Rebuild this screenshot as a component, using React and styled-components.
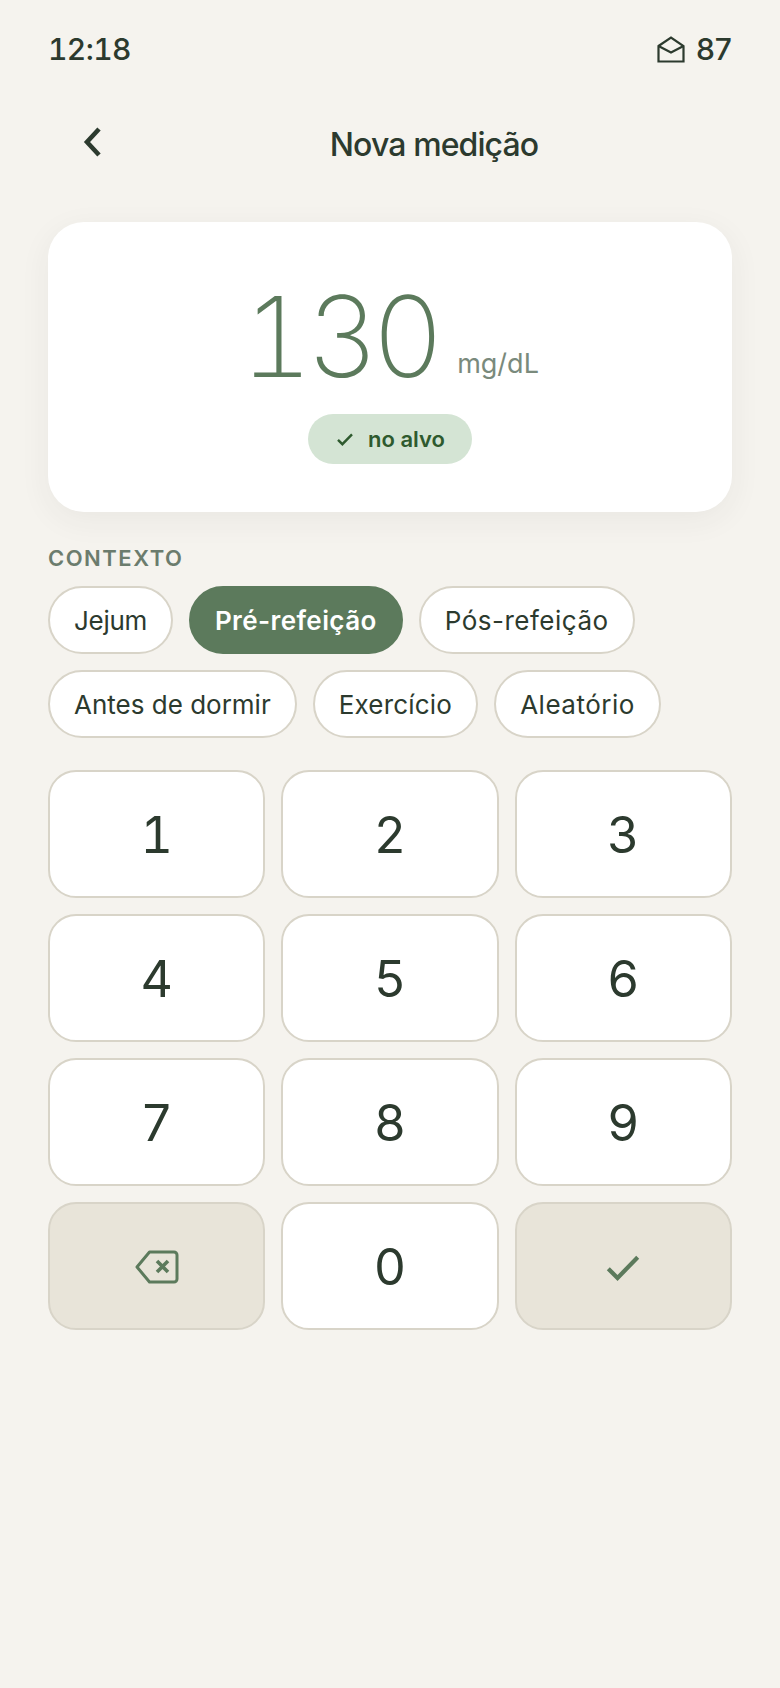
import React from "react";
import styled, { createGlobalStyle } from "styled-components";

const Global = createGlobalStyle`
  html, body { margin: 0; padding: 0; background: #f5f3ee; }
  body { font-family: "Inter", "Noto Sans", sans-serif; color: #2c3a2e; }
  * { box-sizing: border-box; }
`;
const Page = styled.div`
  width: 780px; height: 1688px; background: #f5f3ee;
  padding: 0 48px; display: flex; flex-direction: column;
`;
const Status = styled.div`
  height: 98px; display: flex; justify-content: space-between; align-items: center;
  font-size: 30px; font-weight: 500;
`;
const Time = styled.span`font-variant-numeric: tabular-nums; letter-spacing: -0.6px;`;
const StatusRight = styled.div`display: flex; align-items: center; gap: 11px;`;
const Header = styled.div`height: 124px; display: flex; align-items: flex-start;`;
const Back = styled.div`width: 88px; height: 88px; display: flex; align-items: center; justify-content: center;`;
const Title = styled.div`
  flex: 1; height: 88px; display: flex; align-items: center; justify-content: center;
  font-size: 32px; font-weight: 500; letter-spacing: -0.9px; padding-top: 4px;
`;
const Card = styled.div`
  height: 290px; background: #fff; border-radius: 36px;
  box-shadow: 0 8px 32px rgba(44,58,46,.06);
  display: flex; flex-direction: column; align-items: center; padding-top: 62px;
`;
const ValueRow = styled.div`display: flex; align-items: flex-end; gap: 20px; height: 104px;`;
const Value = styled.div`
  font-size: 112px; font-weight: 250; color: #5c7a5c; line-height: 104px; letter-spacing: -7px;
  font-variant-numeric: tabular-nums;
`;
const Unit = styled.div`font-size: 27px; color: #7a8a7c; font-weight: 400; line-height: 34px; margin-bottom: 7px;`;
const Badge = styled.div`
  margin-top: 26px; height: 50px; width: 164px; border-radius: 25px; background: #d4e4d4; color: #2e5a2e;
  font-size: 22px; font-weight: 600; display: flex; align-items: center; justify-content: center; gap: 13px;
`;
const Label = styled.div`
  margin-top: 32px; font-size: 22px; font-weight: 600; color: #6b7c6d; letter-spacing: 1.5px; line-height: 28px;
`;
const Chips = styled.div`display: flex; flex-wrap: wrap; gap: 16px; margin-top: 14px;`;
const Chip = styled.div`
  height: 68px; padding: 0 24px; border-radius: 34px; font-size: 26px; display: flex; align-items: center;
  letter-spacing: ${p => p.$track}px;
  background: ${p => p.$on ? "#5c7a5c" : "#fff"}; color: ${p => p.$on ? "#fff" : "#2c3a2e"};
  border: 2px solid ${p => p.$on ? "#5c7a5c" : "#d8d4c8"}; font-weight: ${p => p.$on ? 600 : 400};
`;
const Pad = styled.div`
  margin-top: 32px; display: grid; grid-template-columns: repeat(3, 1fr); grid-auto-rows: 128px; gap: 16px;
`;
const Key = styled.div`
  border-radius: 28px; border: 2px solid #d8d4c8; background: ${p => p.$alt ? "#e8e4d9" : "#fff"};
  display: flex; align-items: center; justify-content: center; font-size: 50px; font-weight: 400; color: #2c3a2e;
  padding-top: 2px; font-variant-numeric: tabular-nums;
`;

const Mail = () => (
  <svg width="28" height="27" viewBox="0 0 28 27" fill="none" stroke="#2c3a2e" strokeWidth="2.2">
    <path d="M1.5 10 14 1.5 26.5 10v15.5h-25Z" /><path d="m1.5 10 12.5 6.5L26.5 10" />
  </svg>
);
const Chevron = () => (
  <svg width="20" height="30" viewBox="0 0 20 30" fill="none" stroke="#2c3a2e" strokeWidth="4.6">
    <path d="M17 2 5 15l12 13" />
  </svg>
);
const Check = ({ s = 20, c = "#2e5a2e", w = 2.4 }) => (
  <svg width={s} height={s} viewBox="0 0 20 20" fill="none" stroke={c} strokeWidth={w}>
    <path d="M3 10.8 7.4 15.2 17 5.4" />
  </svg>
);
const Backspace = () => (
  <svg width="44" height="34" viewBox="0 0 44 34" fill="none" stroke="#5c7a5c" strokeWidth="3" strokeLinejoin="round">
    <path d="M14.5 2H39a3 3 0 0 1 3 3v24a3 3 0 0 1-3 3H14.5L2 17Z" />
    <path d="m22 11 11 11M33 11 22 22" strokeWidth="3.6" />
  </svg>
);

const chips = [
  ["Jejum", -0.3], ["Pré-refeição", 0.4], ["Pós-refeição", 0.5],
  ["Antes de dormir", 0], ["Exercício", 0.2], ["Aleatório", 0.5],
];

export default function App() {
  return (
    <Page>
      <Global />
      <Status>
        <Time>12:18</Time>
        <StatusRight><Mail /><span>87</span></StatusRight>
      </Status>
      <Header>
        <Back><Chevron /></Back>
        <Title>Nova medição</Title>
      </Header>
      <Card>
        <ValueRow><Value>130</Value><Unit>mg/dL</Unit></ValueRow>
        <Badge><Check />no alvo</Badge>
      </Card>
      <Label>CONTEXTO</Label>
      <Chips>{chips.map(([c, t]) => <Chip key={c} $track={t} $on={c === "Pré-refeição"}>{c}</Chip>)}</Chips>
      <Pad>
        {["1","2","3","4","5","6","7","8","9"].map(n => <Key key={n}>{n}</Key>)}
        <Key $alt><Backspace /></Key>
        <Key>0</Key>
        <Key $alt><Check s={42} c="#5c7a5c" w={2} /></Key>
      </Pad>
    </Page>
  );
}
